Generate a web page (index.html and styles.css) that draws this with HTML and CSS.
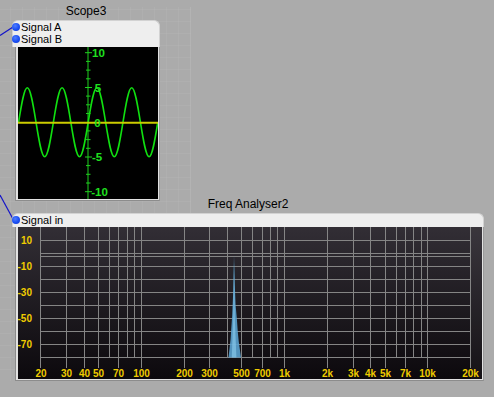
FILE: index.html
```html
<!DOCTYPE html>
<html>
<head>
<meta charset="utf-8">
<link rel="stylesheet" href="styles.css">
</head>
<body>
<div class="canvas">
  <div class="grid-zone"></div>
  <svg class="wires" width="494" height="397" viewBox="0 0 494 397">
    <line x1="0" y1="35.5" x2="13" y2="27" />
    <line x1="0" y1="195" x2="13" y2="219" />
  </svg>

  <div class="node node-scope">
    <div class="node-title">Scope3</div>
    <div class="node-head head-two">
      <div class="pin"><span class="dot"></span><span>Signal A</span></div>
      <div class="pin"><span class="dot"></span><span>Signal B</span></div>
    </div>
    <div class="node-body">
      <svg class="plot" width="140" height="152" viewBox="18 47 140 152">
        <rect x="18" y="47" width="140" height="152" fill="#000"/>
        <g class="scope-axis">
          <line x1="88" y1="47" x2="88" y2="199"/>
          <line x1="85" y1="52.7" x2="92" y2="52.7"/>
          <line x1="86" y1="61.4" x2="90.5" y2="61.4"/>
          <line x1="86" y1="70.1" x2="90.5" y2="70.1"/>
          <line x1="86" y1="78.8" x2="90.5" y2="78.8"/>
          <line x1="85" y1="87.5" x2="92" y2="87.5"/>
          <line x1="86" y1="96.1" x2="90.5" y2="96.1"/>
          <line x1="86" y1="104.8" x2="90.5" y2="104.8"/>
          <line x1="86" y1="113.5" x2="90.5" y2="113.5"/>
          <line x1="86" y1="130.9" x2="90.5" y2="130.9"/>
          <line x1="86" y1="139.6" x2="90.5" y2="139.6"/>
          <line x1="86" y1="148.3" x2="90.5" y2="148.3"/>
          <line x1="85" y1="157" x2="92" y2="157"/>
          <line x1="86" y1="165.6" x2="90.5" y2="165.6"/>
          <line x1="86" y1="174.3" x2="90.5" y2="174.3"/>
          <line x1="86" y1="183" x2="90.5" y2="183"/>
          <line x1="85" y1="191.7" x2="92" y2="191.7"/>
        </g>
        <path class="wave" d="M18.6 122.2 c2.908 -18.12 5.569 -34.5 8.7 -34.5
          s5.792 16.38 8.7 34.5 s5.569 34.5 8.7 34.5 s5.792 -16.38 8.7 -34.5
          s5.569 -34.5 8.7 -34.5 s5.792 16.38 8.7 34.5 s5.569 34.5 8.7 34.5 s5.792 -16.38 8.7 -34.5
          s5.569 -34.5 8.7 -34.5 s5.792 16.38 8.7 34.5 s5.569 34.5 8.7 34.5 s5.792 -16.38 8.7 -34.5
          s5.569 -34.5 8.7 -34.5 s5.792 16.38 8.7 34.5 s5.569 34.5 8.7 34.5 s5.792 -16.38 8.7 -34.5"/>
        <line class="zero" x1="18" y1="122.7" x2="158" y2="122.7"/>
        <g class="scope-labels">
          <text x="98.5" y="57">10</text>
          <text x="98" y="91.8">5</text>
          <text x="97.5" y="126.6">0</text>
          <text x="97" y="161.3">-5</text>
          <text x="99.5" y="196">-10</text>
        </g>
      </svg>
    </div>
  </div>

  <div class="node node-freq">
    <div class="node-title">Freq Analyser2</div>
    <div class="node-head head-one">
      <div class="pin"><span class="dot"></span><span>Signal in</span></div>
    </div>
    <div class="node-body">
      <svg class="plot" width="464" height="152" viewBox="18 227 464 152">
        <defs>
          <linearGradient id="bg" x1="0" y1="0" x2="0" y2="1">
            <stop offset="0" stop-color="#322e35"/>
            <stop offset="1" stop-color="#0c090d"/>
          </linearGradient>
        </defs>
        <rect x="18" y="227" width="464" height="152" fill="url(#bg)"/>
        <rect x="471" y="227" width="11" height="152" fill="#ffffff" opacity="0.04"/>
        <g class="grid">
          <line x1="40" y1="240.5" x2="471" y2="240.5"/>
          <line x1="40" y1="253.5" x2="471" y2="253.5"/>
          <line x1="40" y1="256.5" x2="471" y2="256.5"/>
          <line x1="40" y1="266.5" x2="471" y2="266.5"/>
          <line x1="40" y1="279.5" x2="471" y2="279.5"/>
          <line x1="40" y1="292.5" x2="471" y2="292.5"/>
          <line x1="40" y1="305.5" x2="471" y2="305.5"/>
          <line x1="40" y1="318.5" x2="471" y2="318.5"/>
          <line x1="40" y1="331.5" x2="471" y2="331.5"/>
          <line x1="40" y1="344.5" x2="471" y2="344.5"/>
          <line x1="40" y1="357.5" x2="471" y2="357.5"/>

          <line x1="40.5" y1="227" x2="40.5" y2="368"/>
          <line x1="66.5" y1="227" x2="66.5" y2="368"/>
          <line x1="84.5" y1="227" x2="84.5" y2="368"/>
          <line x1="98.5" y1="227" x2="98.5" y2="368"/>
          <line x1="109.5" y1="227" x2="109.5" y2="358"/>
          <line x1="118.5" y1="227" x2="118.5" y2="368"/>
          <line x1="127.5" y1="227" x2="127.5" y2="358"/>
          <line x1="134.5" y1="227" x2="134.5" y2="358"/>
          <line x1="141.5" y1="227" x2="141.5" y2="368"/>
          <line x1="184.5" y1="227" x2="184.5" y2="368"/>
          <line x1="209.5" y1="227" x2="209.5" y2="368"/>
          <line x1="227.5" y1="227" x2="227.5" y2="358"/>
          <line x1="241.5" y1="227" x2="241.5" y2="368"/>
          <line x1="252.5" y1="227" x2="252.5" y2="358"/>
          <line x1="262.5" y1="227" x2="262.5" y2="368"/>
          <line x1="270.5" y1="227" x2="270.5" y2="358"/>
          <line x1="277.5" y1="227" x2="277.5" y2="358"/>
          <line x1="284.5" y1="227" x2="284.5" y2="368"/>
          <line x1="327.5" y1="227" x2="327.5" y2="368"/>
          <line x1="353.5" y1="227" x2="353.5" y2="368"/>
          <line x1="370.5" y1="227" x2="370.5" y2="368"/>
          <line x1="385.5" y1="227" x2="385.5" y2="368"/>
          <line x1="396.5" y1="227" x2="396.5" y2="358"/>
          <line x1="405.5" y1="227" x2="405.5" y2="368"/>
          <line x1="413.5" y1="227" x2="413.5" y2="358"/>
          <line x1="421.5" y1="227" x2="421.5" y2="358"/>
          <line x1="427.5" y1="227" x2="427.5" y2="368"/>
          <line x1="470.5" y1="227" x2="470.5" y2="368"/>
        </g>
        <polygon class="peak" points="228.5,357.5 230.5,340 232.2,315 233.3,290 234,255.5 234.8,285 235.6,305 236.8,318 237.8,332 238.8,342 241,357.5"/>
        <polygon class="peak-core" points="231.8,357.5 233.2,318 234,262 234.8,318 236.4,357.5"/>
        <g class="db-labels">
          <text x="21" y="244">10</text>
          <text x="17.5" y="270">-10</text>
          <text x="17.5" y="296">-30</text>
          <text x="17.5" y="322">-50</text>
          <text x="17.5" y="348">-70</text>
        </g>
        <g class="hz-labels">
          <text x="41" y="377">20</text>
          <text x="66.5" y="377">30</text>
          <text x="84.5" y="377">40</text>
          <text x="98.5" y="377">50</text>
          <text x="118.5" y="377">70</text>
          <text x="141.5" y="377">100</text>
          <text x="184.5" y="377">200</text>
          <text x="209.5" y="377">300</text>
          <text x="241.5" y="377">500</text>
          <text x="262.5" y="377">700</text>
          <text x="284.5" y="377">1k</text>
          <text x="327.5" y="377">2k</text>
          <text x="353.5" y="377">3k</text>
          <text x="370.5" y="377">4k</text>
          <text x="385.5" y="377">5k</text>
          <text x="405.5" y="377">7k</text>
          <text x="427.5" y="377">10k</text>
          <text x="470.5" y="377">20k</text>
        </g>
      </svg>
    </div>
  </div>
</div>
</body>
</html>
```

FILE: styles.css
```css
html, body {
  margin: 0;
  padding: 0;
}

body {
  background: #ababab;
  font-family: "Liberation Sans", Arial, sans-serif;
  color: #000;
  overflow: hidden;
}

.canvas {
  position: relative;
  width: 494px;
  height: 397px;
}

.grid-zone {
  position: absolute;
  left: 0;
  top: 7px;
  width: 190px;
  height: 374px;
  border-right: 1px solid rgba(255, 255, 255, 0.05);
  background-image:
    linear-gradient(to right, rgba(255, 255, 255, 0.045) 1px, transparent 1px),
    linear-gradient(to bottom, rgba(255, 255, 255, 0.045) 1px, transparent 1px);
  background-size: 12px 12px;
  background-position: 10px 2px;
}

.wires {
  position: absolute;
  left: 0;
  top: 0;
}

.wires line {
  stroke: #1414c8;
  stroke-width: 1.2;
}

.node {
  position: absolute;
  display: flex;
  flex-direction: column;
}

.node-scope {
  left: 12px;
  top: 3px;
  width: 148px;
}

.node-freq {
  left: 12px;
  top: 196px;
  width: 472px;
}

.node-title {
  font-size: 12px;
  line-height: 16px;
  height: 16px;
  text-align: center;
  margin-bottom: 1px;
  color: #000;
}

.node-head {
  background: #eeeeee;
  border: 1px solid #d2d2d2;
  border-bottom: none;
  border-radius: 6px 6px 0 0;
  display: flex;
  flex-direction: column;
}

.head-two {
  padding-bottom: 2px;
}

.head-one {
  padding-bottom: 1px;
}

.pin {
  display: flex;
  align-items: center;
  height: 12px;
  font-size: 11px;
  gap: 1px;
}

.dot {
  width: 8px;
  height: 8px;
  margin-left: -1px;
  border-radius: 50%;
  background: radial-gradient(circle at 40% 35%, #4f7dff 0%, #1a4ef2 55%, #1236c8 100%);
  flex: none;
}

.node-body {
  margin-left: 3px;
  border: 1px solid #8c8c8c;
  border-top: none;
  border-right-color: #9a9a9a;
  padding: 0 1px 1px 2px;
  background: #e2e2e2;
}

.plot {
  display: block;
}

.scope-axis line {
  stroke: #1fd01f;
  stroke-width: 1;
}

.wave {
  fill: none;
  stroke: #10e010;
  stroke-width: 1.6;
}

.zero {
  stroke: #cccc00;
  stroke-width: 2;
}

.scope-labels text {
  fill: #1fe01f;
  font-family: "Liberation Sans", Arial, sans-serif;
  font-weight: bold;
  font-size: 11.5px;
  text-anchor: middle;
}

.grid line {
  stroke: #858585;
  stroke-width: 1;
}

.peak {
  fill: #5aa2cf;
  opacity: 0.9;
}

.peak-core {
  fill: #86c6e8;
  opacity: 0.7;
}

.db-labels text,
.hz-labels text {
  fill: #f0cc00;
  font-family: "Liberation Sans", Arial, sans-serif;
  font-weight: bold;
  font-size: 10px;
}

.hz-labels text {
  text-anchor: middle;
}
```
